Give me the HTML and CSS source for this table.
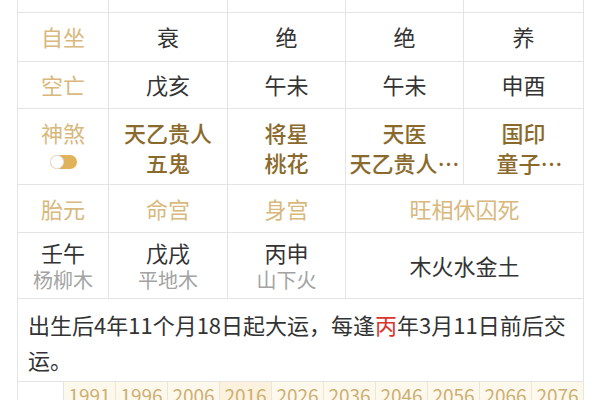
FILE: index.html
```html
<!DOCTYPE html>
<html lang="zh-CN">
<head>
<meta charset="utf-8">
<link rel="stylesheet" href="styles.css">
</head>
<body>
<div class="board">
  <div class="grid">
    <div class="c"></div><div class="c"></div><div class="c"></div><div class="c"></div><div class="c"></div>

    <div class="c lbl">自坐</div>
    <div class="c">衰</div>
    <div class="c">绝</div>
    <div class="c">绝</div>
    <div class="c">养</div>

    <div class="c lbl">空亡</div>
    <div class="c">戊亥</div>
    <div class="c">午未</div>
    <div class="c">午未</div>
    <div class="c">申酉</div>

    <div class="c lbl stack">
      <span class="ln">神煞</span>
      <span class="ln"><span class="toggle"><span class="knob"></span></span></span>
    </div>
    <div class="c stack sha"><span class="ln">天乙贵人</span><span class="ln">五鬼</span></div>
    <div class="c stack sha"><span class="ln">将星</span><span class="ln">桃花</span></div>
    <div class="c stack sha"><span class="ln">天医</span><span class="ln clip">天乙贵人…</span></div>
    <div class="c stack sha"><span class="ln">国印</span><span class="ln clip shift">童子…</span></div>

    <div class="c lbl">胎元</div>
    <div class="c lbl">命宫</div>
    <div class="c lbl">身宫</div>
    <div class="c lbl span2">旺相休囚死</div>

    <div class="c stack ny"><span class="ln">壬午</span><span class="ln sub">杨柳木</span></div>
    <div class="c stack ny"><span class="ln">戊戌</span><span class="ln sub">平地木</span></div>
    <div class="c stack ny"><span class="ln">丙申</span><span class="ln sub">山下火</span></div>
    <div class="c span2">木火水金土</div>

    <div class="c note">出生后4年11个月18日起大运，每逢<span class="red">丙</span>年3月11日前后交运。</div>
  </div>
  <div class="years">
    <div class="y blank"></div>
    <div class="y">1991</div>
    <div class="y">1996</div>
    <div class="y">2006</div>
    <div class="y cur">2016</div>
    <div class="y">2026</div>
    <div class="y">2036</div>
    <div class="y">2046</div>
    <div class="y">2056</div>
    <div class="y">2066</div>
    <div class="y">2076</div>
  </div>
</div>
</body>
</html>
```

FILE: styles.css
```css
* { box-sizing: border-box; }
html, body { margin: 0; padding: 0; background: #fff; }
body {
  font-family: "Noto Sans CJK SC", "Noto Sans", sans-serif;
  color: #333;
  overflow: hidden;
  height: 400px;
}
.board {
  margin-left: 17px;
  width: 567px;
  border-left: 1px solid #e4e4e4;
}
.grid {
  display: grid;
  grid-template-columns: 91px 119px 118px 118px 120px;
  grid-template-rows: 13px 49px 47px 76px 48px 66px auto;
}
.c {
  border-right: 1px solid #e4e4e4;
  border-bottom: 1px solid #e4e4e4;
  display: flex;
  align-items: center;
  justify-content: center;
  font-size: 22px;
  line-height: 30px;
  white-space: nowrap;
  overflow: hidden;
  padding-bottom: 2px;
}
.lbl { color: #d8b87c; }
.span2 { grid-column: span 2; }
.stack { flex-direction: column; padding-bottom: 0; }
.ln { display: flex; align-items: center; justify-content: center; height: 30px; }
.sha { color: #8a6a2c; font-weight: 500; }
.clip { max-width: 112px; overflow: hidden; }
.shift { padding-left: 12px; }
.ny .ln { height: 27px; line-height: 27px; }
.ny .sub { font-size: 20px; color: #a3a3a3; }
.toggle {
  display: block;
  width: 27px;
  height: 14px;
  border-radius: 7px;
  background: #e1b25c;
  position: relative;
}
.knob {
  position: absolute;
  left: 0;
  top: 0;
  width: 14px;
  height: 14px;
  border-radius: 50%;
  background: #fff;
  border: 1px solid #e2e2e2;
}
.note {
  grid-column: 1 / -1;
  display: block;
  white-space: normal;
  text-align: left;
  font-size: 22px;
  line-height: 35px;
  padding: 8px 10px 4px 10px;
}
.red { color: #d9342c; }
.years {
  display: grid;
  grid-template-columns: 46px repeat(10, 52px);
}
.y {
  height: 40px;
  border-right: 1px solid #ece6d6;
  background: #fdf8ec;
  color: #cdaf74;
  font-size: 19px;
  line-height: 24px;
  padding-top: 1px;
  text-align: center;
}
.y.blank { background: #fff; border-right-color: #e4e4e4; }
.y.cur { background: #fbf1dc; }
```
